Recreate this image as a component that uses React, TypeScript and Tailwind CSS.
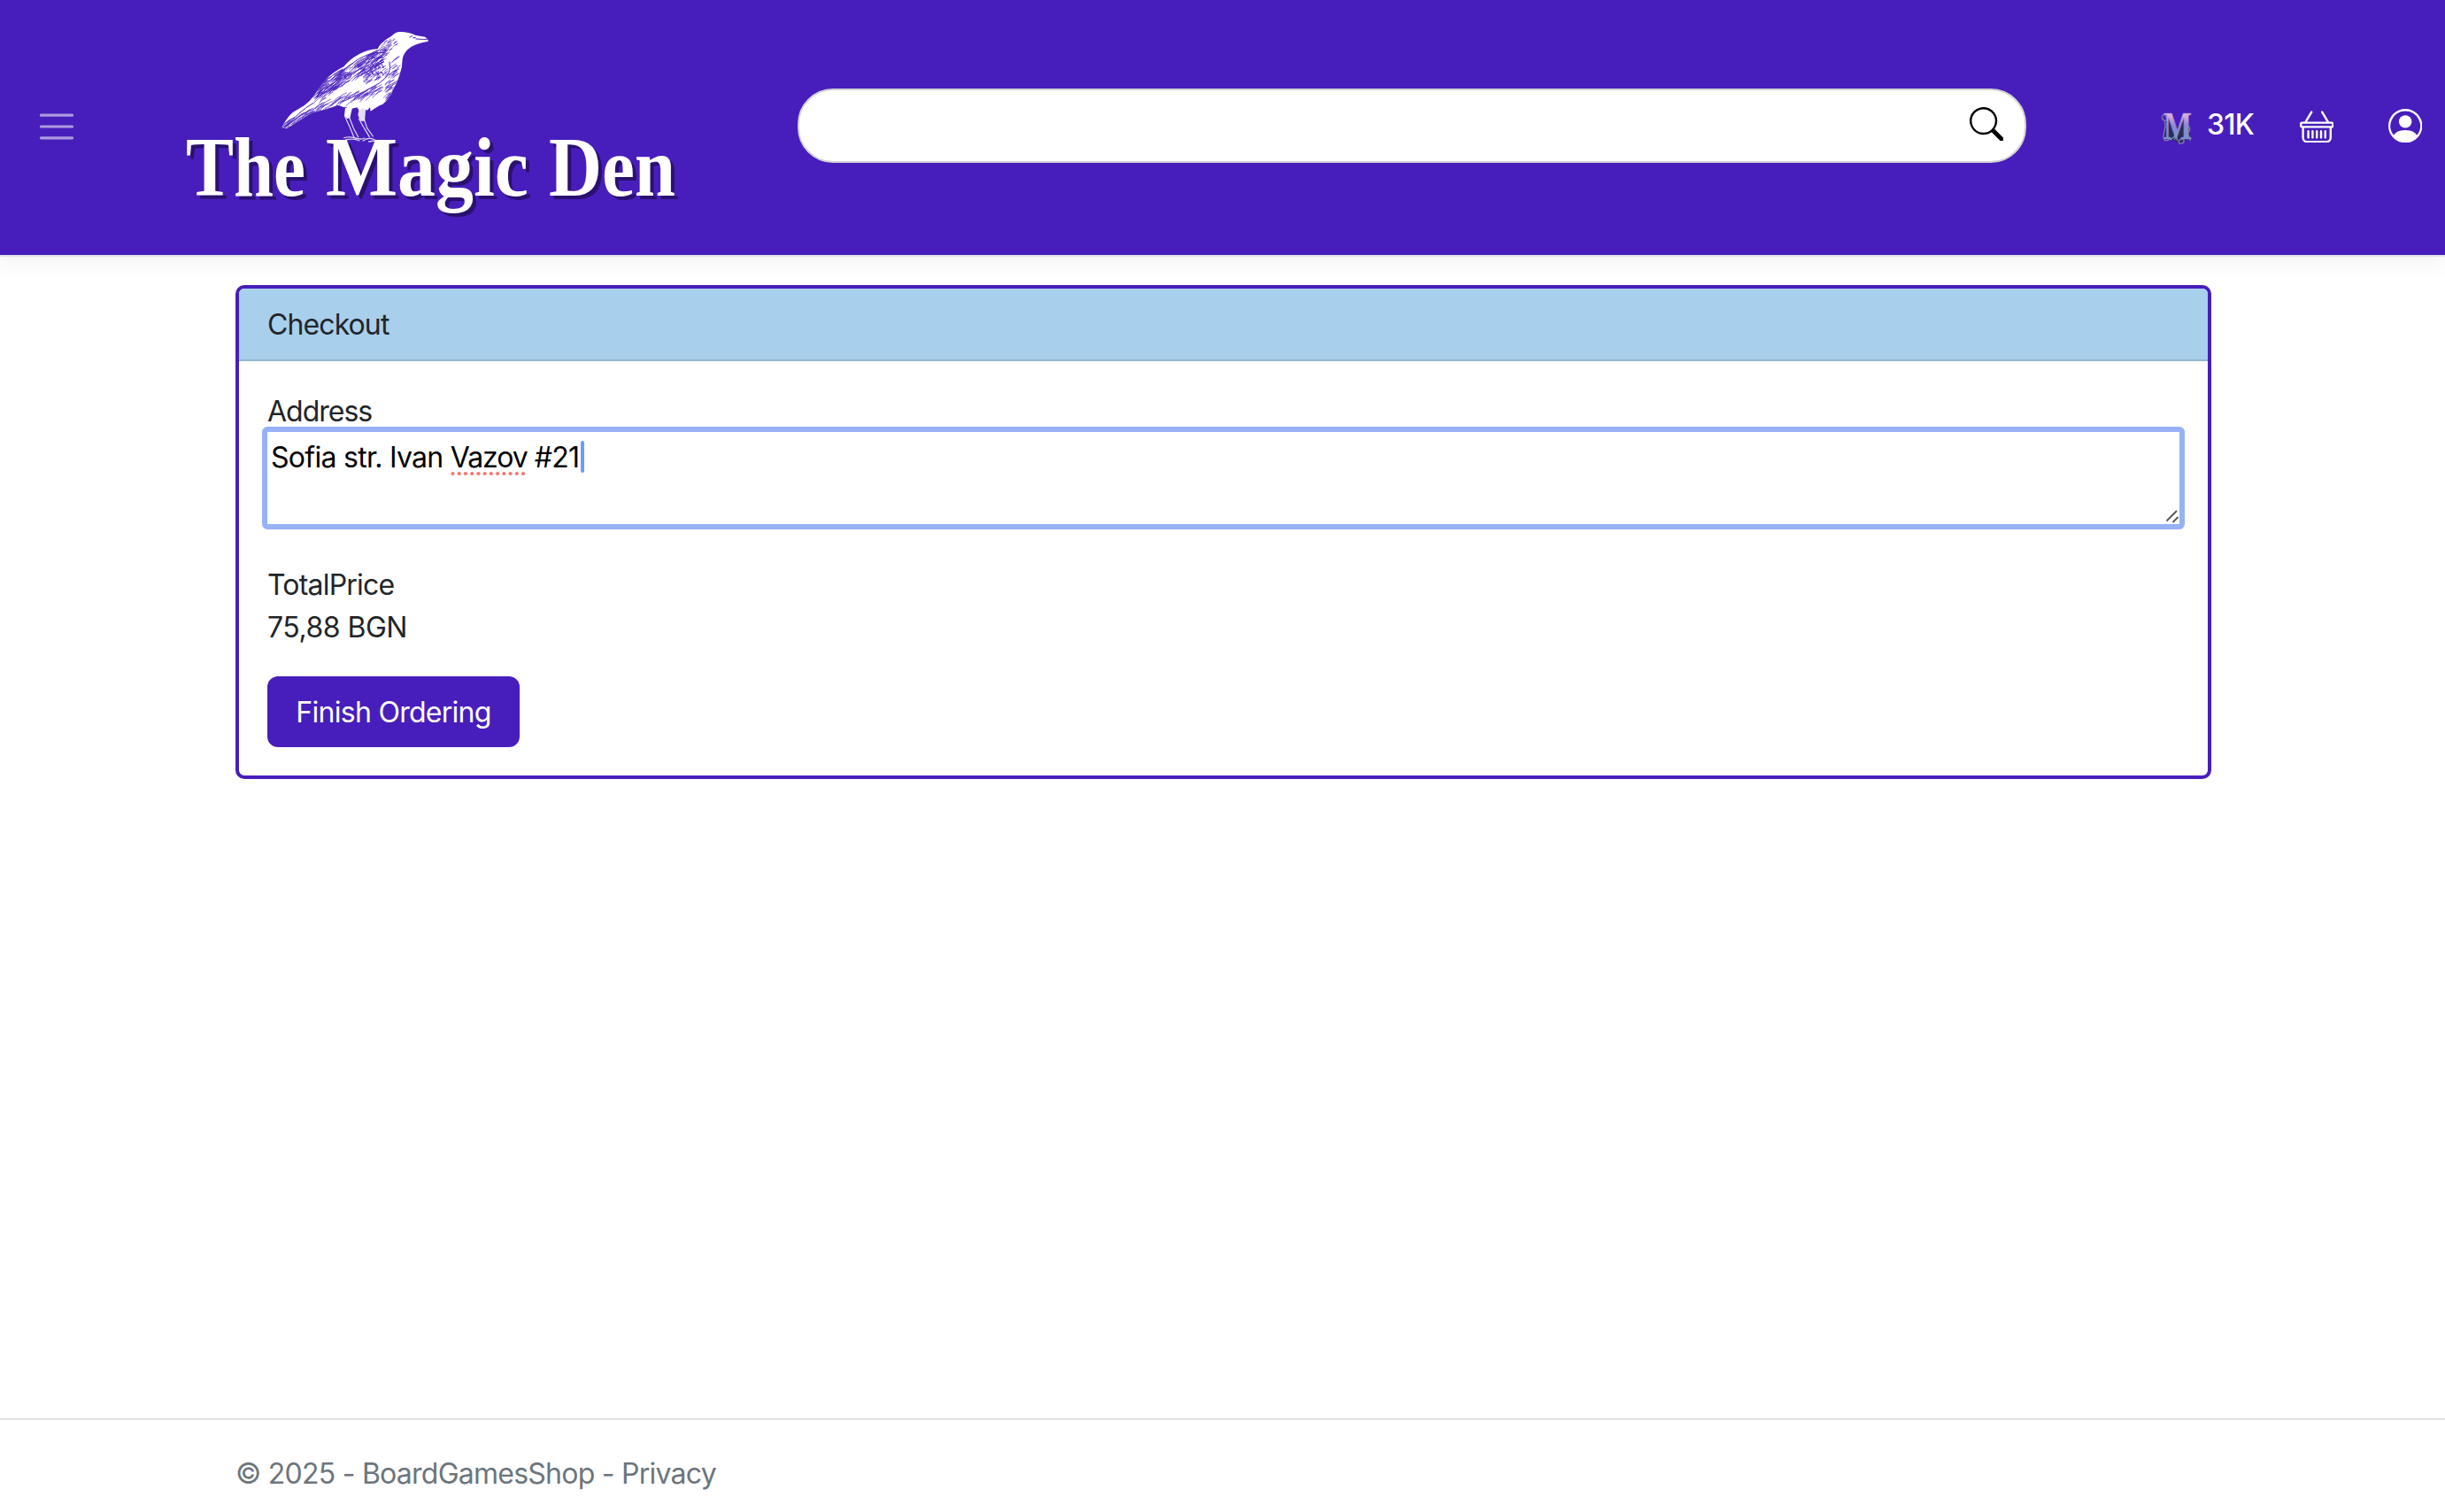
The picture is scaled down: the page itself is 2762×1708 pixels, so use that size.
import { BsBasket, BsPersonCircle, BsSearch } from "react-icons/bs";

const BODY =
  "M551 75L541 65Q522 62 507 59Q480 46 452 48Q438 50 427 62Q405 74 392 88Q384 96 380 106Q345 108 318 123Q285 140 265 166Q228 184 203 211Q180 236 166 262Q150 284 132 297L92 321Q72 338 55 372L70 376Q92 365 112 350Q138 332 162 321Q205 312 246 296Q262 304 276 304L272 318L292 308L310 304L318 316L330 306L344 314L354 304L356 317Q378 300 397 293Q424 270 430 248Q446 222 454 195Q464 168 464 140Q468 116 492 100Q512 86 551 80Z";

function feathers() {
  let seed = 17;
  const rnd = () => {
    seed = (seed * 16807) % 2147483647;
    return seed / 2147483647;
  };
  const out: string[] = [];
  const add = (x0: number, y0: number, x1: number, y1: number, spread: number, n: number, len: number) => {
    for (let i = 0; i < n; i++) {
      const t = rnd();
      const s = (rnd() - 0.5) * spread;
      const x = x0 + (x1 - x0) * t + s * 0.5;
      const y = y0 + (y1 - y0) * t + s;
      const l = len * (0.5 + rnd());
      out.push(
        `M${x.toFixed(1)} ${y.toFixed(1)}q${(-l * 0.5).toFixed(1)} ${(l * 0.15).toFixed(1)} ${(-l).toFixed(1)} ${(l * 0.75).toFixed(1)}`,
      );
    }
  };
  add(415, 115, 185, 245, 44, 190, 24);
  add(410, 160, 330, 185, 64, 110, 11);
  add(280, 180, 190, 270, 30, 40, 22);
  add(400, 235, 250, 275, 26, 50, 24);
  add(230, 285, 75, 365, 26, 74, 24);
  add(440, 70, 400, 115, 34, 44, 8);
  add(458, 140, 420, 260, 34, 50, 15);
  return out.join("");
}

const FEATHERS = feathers();

function Bird() {
  return (
    <g transform="translate(300 20) scale(0.33333)">
      <defs>
        <clipPath id="body">
          <path d={BODY} />
        </clipPath>
      </defs>
      <path d={BODY} fill="#fff" />
      <g clipPath="url(#body)" fill="none" stroke="#471ebb" strokeLinecap="round">
        <path d={FEATHERS} strokeWidth="2.3" opacity="0.85" />
        <path
          d="M405 118Q340 115 290 158Q240 190 200 228M400 135Q340 130 300 168M420 150Q432 190 385 222Q340 250 260 285M290 190Q262 190 270 206Q285 212 290 195M345 160l12 12m4-18l10 14m6-14l8 14m8-12l6 14M335 180l14 12m8-10l10 12m6-12l10 12m8-12l8 12M215 225Q185 245 175 270M160 290Q110 320 75 365M150 312Q110 335 65 372"
          strokeWidth="3"
        />
        <path d="M510 72Q535 74 552 73M497 62l-8 4M500 68h8" strokeWidth="3" />
      </g>
      <g fill="none" stroke="#fff" strokeLinecap="round">
        <path d="M270 306L294 304L286 340L276 342L267 330Z" fill="#fff" stroke="none" />
        <path d="M318 304L340 304L336 350L322 350L313 330Z" fill="#fff" stroke="none" opacity="0.85" />
        <path d="M268 332L286 372L300 406M284 338L298 374L314 404M316 342L334 374L352 404M334 344L344 374L364 402" strokeWidth="3.5" opacity="0.85" />
        <path d="M266 407Q285 402 305 408T335 408M272 414Q300 408 318 417M330 417Q350 402 370 414T408 417M350 420Q375 414 398 424" strokeWidth="4" opacity="0.75" />
      </g>
    </g>
  );
}

function Logo() {
  return (
    <svg className="block h-72 w-[580px] shrink-0 overflow-visible" viewBox="200 0 580 288">
      <text
        className="drop-shadow-[4px_4px_0_#2a1170]"
        fontFamily="'Liberation Serif', serif"
        fontWeight="700"
        fontSize="96"
        fill="#fff"
        y="221"
      >
        <tspan x="210" textLength="135" lengthAdjust="spacingAndGlyphs">The</tspan>{" "}
        <tspan x="368" textLength="229" lengthAdjust="spacingAndGlyphs">Magic</tspan>{" "}
        <tspan x="620" textLength="143" lengthAdjust="spacingAndGlyphs">Den</tspan>
      </text>
      <Bird />
    </svg>
  );
}

function Coin() {
  return (
    <svg className="h-10 w-9 shrink-0 overflow-visible" viewBox="0 0 36 40">
      <defs>
        <linearGradient id="coin" x1="0" y1="0" x2="0" y2="1">
          <stop offset="0.25" stopColor="#e0addf" />
          <stop offset="0.5" stopColor="#9184dc" />
          <stop offset="0.8" stopColor="#7296cc" />
        </linearGradient>
      </defs>
      <path d="M5 12L12 10L19 20L26 10L31 18L34 32L26 35L20 38L14 34L3 33Z" fill="#2d2b58" />
      <g fill="none" stroke="#7b74a4" strokeWidth="1.5">
        <path d="M6 6C1 4 0 11 4 12S8 8 5 8M4 13C7 19 3 24 3 30S8 36 10 32M30 18c5 3 2 7 0 8s5 5 3 9M15 34c1-4 5-2 3 1M20 36c2-5 7-3 6 0s-6 3-6 0" />
      </g>
      <text
        x="3"
        y="33"
        fontFamily="'Liberation Serif', serif"
        fontWeight="700"
        fontSize="45"
        textLength="32"
        lengthAdjust="spacingAndGlyphs"
        fill="url(#coin)"
        stroke="#8c82cf"
        strokeWidth="0.6"
      >
        M
      </text>
      <path d="M26 25q5-5 5-7M10 34q5-2 8-8" fill="none" stroke="#6ba7b3" strokeWidth="1.2" />
    </svg>
  );
}

const DOTS = Array.from({ length: 12 }, (_, i) => 2.5 + i * 7.23);

function AddressBox() {
  return (
    <div className="relative -m-1.5 h-[116px] rounded-md border-6 border-[#97b1f5] bg-white px-1 pt-[5px] text-black">
      <span className="tracking-[-0.72px]">Sofia str. Ivan </span>
      <span className="relative tracking-[-1.1px]">
        Vazov
        <svg className="absolute top-[35px] left-0 h-1.5 w-[86px] overflow-visible" viewBox="0 0 86 6">
          {DOTS.map((x) => (
            <circle key={x} cx={x} cy="3" r="2.1" fill="#f4776d" />
          ))}
        </svg>
      </span>
      <span className="tracking-[-0.8px]"> #21</span>
      <span className="absolute top-2.5 left-[354px] h-9 w-1 rounded-full bg-[#6a9cf8]" />
      <svg className="absolute right-0 bottom-0 size-5" viewBox="0 0 20 20">
        <path d="M5.5 16.5L17 5M12.5 18L18.5 12" stroke="#555" strokeWidth="1.8" />
      </svg>
    </div>
  );
}

export default function App() {
  return (
    <div className="flex h-[1708px] w-full flex-col overflow-hidden bg-white font-[Inter,sans-serif] text-[32px] leading-[48px] text-[#212529]">
      <header className="flex h-[290px] shrink-0 border-b-2 border-[#dee2e6] bg-[#471ebb] shadow-[0_8px_24px_rgba(0,0,0,0.05)]">
        <button className="mt-[119px] ml-10 size-12" aria-label="Menu">
          <svg viewBox="0 0 30 30" className="size-12">
            <path d="M4 7h22M4 15h22M4 23h22" stroke="#fff" strokeOpacity="0.55" strokeWidth="2" strokeLinecap="round" />
          </svg>
        </button>
        <div className="ml-28">
          <Logo />
        </div>
        <div className="mt-[100px] ml-[121px] flex h-[84px] w-[1388px] items-center justify-end rounded-[40px] border-2 border-[#d3d3d3] bg-white pr-6 pb-1">
          <BsSearch className="size-[38.4px] text-black" />
        </div>
        <div className="mt-[124px] ml-[152px] flex h-10">
          <Coin />
        </div>
        <span className="mt-[117px] ml-4 w-[60px] font-medium tracking-[-0.8px] whitespace-nowrap text-white">31K</span>
        <BsBasket className="mt-[122.5px] ml-[45px] size-[38.4px] shrink-0 text-white" />
        <BsPersonCircle className="mt-[122.5px] ml-[61.6px] size-[38.4px] shrink-0 text-white" />
      </header>
      <main className="flex-1 px-[266px] pt-8">
        <section className="h-[558px] w-[2232px] overflow-hidden rounded-[10px] border-4 border-[#471ebb]">
          <h1 className="h-[82px] border-b-2 border-[#94b8d0] bg-[#a8cfeb] px-8 pt-[17px] tracking-[-0.9px]">Checkout</h1>
          <div className="px-8 pt-[33px]">
            <div className="h-[47px] tracking-[-1px]">Address</div>
            <AddressBox />
            <div className="mt-[45px] tracking-[-0.8px]">TotalPrice</div>
            <div className="tracking-[-0.5px]">75,88 BGN</div>
            <button className="mt-[31px] h-20 w-[285px] rounded-xl bg-[#471ebb] pt-0.5 tracking-[-0.72px] text-white">
              Finish Ordering
            </button>
          </div>
        </section>
      </main>
      <footer className="h-[106px] shrink-0 border-t-2 border-[#dee2e6] px-[266px] leading-[122px] tracking-[-0.75px] text-[#6c757d]">
        © 2025 - BoardGamesShop - Privacy
      </footer>
    </div>
  );
}
